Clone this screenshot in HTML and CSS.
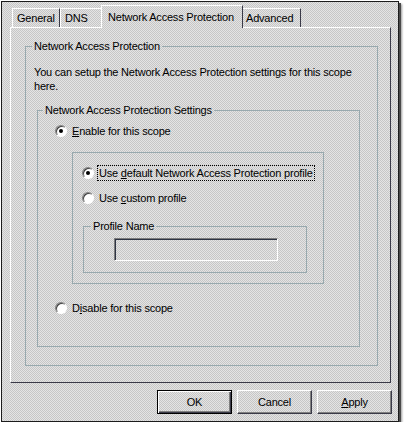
FILE: index.html
```html
<!DOCTYPE html>
<html lang="en">
<head>
  <meta charset="UTF-8">
  <title>Scope Properties</title>
  <link rel="stylesheet" href="styles.css">
</head>
<body>
  <div class="dialog">
    <div class="tabs">
      <div class="tab tab-general">General</div>
      <div class="tab tab-dns">DNS</div>
      <div class="tab tab-active">Network Access Protection</div>
      <div class="tab tab-advanced">Advanced</div>
    </div>

    <div class="panel">
      <fieldset class="group group-outer">
        <legend>Network Access Protection</legend>
        <p class="intro">You can setup the Network Access Protection settings for this scope here.</p>

        <fieldset class="group group-settings">
          <legend>Network Access Protection Settings</legend>
          <label class="radio row-enable"><span class="dot checked"></span><span class="text"><u>E</u>nable for this scope</span></label>

          <div class="profile-box">
            <label class="radio row-default"><span class="dot checked"></span><span class="text focus">Use <u>d</u>efault Network Access Protection profile</span></label>
            <label class="radio row-custom"><span class="dot"></span><span class="text">Use <u>c</u>ustom profile</span></label>

            <fieldset class="group group-profile">
              <legend>Profile Name</legend>
              <div class="textbox"></div>
            </fieldset>
          </div>

          <label class="radio row-disable"><span class="dot"></span><span class="text">D<u>i</u>sable for this scope</span></label>
        </fieldset>
      </fieldset>
    </div>

    <div class="buttons">
      <button class="btn btn-default">OK</button>
      <button class="btn">Cancel</button>
      <button class="btn"><u>A</u>pply</button>
    </div>
  </div>
</body>
</html>
```

FILE: styles.css
```css
body {
  margin: 0;
  background-color: #ffffff;
  font-family: "Liberation Sans", Arial, sans-serif;
  font-size: 11px;
  letter-spacing: -0.2px;
  color: #000000;
}

/* dithered classic-grey surface */
.dialog,
.tab-active {
  background: repeating-conic-gradient(#e4e4e4 0 25%, #c6c6c6 0 50%) 0 0 / 2px 2px;
}

.dialog {
  box-sizing: border-box;
  width: 398px;
  height: 421px;
  margin: 1px 0 0 1px;
  padding: 0 7px 0 8px;
  border: 1px solid #1c1c1c;
  box-shadow: 2px 2px 0 #4a4a4a, 3px 3px 2px #9a9a9a;
}

/* tabs */
.tabs {
  display: flex;
  align-items: flex-end;
  height: 22px;
  margin-top: 3px;
  padding-left: 2px;
}

.tab {
  box-sizing: border-box;
  height: 19px;
  padding: 2px 0 0 4px;
  border-top: 1px solid #ffffff;
  border-left: 1px solid #ffffff;
  border-right: 1px solid #3a3a48;
  line-height: 14px;
  white-space: nowrap;
}

.tab-general {
  width: 48px;
}

.tab-dns {
  width: 41px;
  border-right: none;
}

.tab-active {
  position: relative;
  z-index: 1;
  width: 142px;
  height: 23px;
  margin-bottom: -1px;
  padding: 4px 0 0 6px;
}

.tab-advanced {
  width: 58px;
  padding-left: 3px;
  border-left: none;
}

/* page body */
.panel {
  box-sizing: border-box;
  height: 356px;
  padding: 12px 12px 0 14px;
  border: 1px solid;
  border-color: #ffffff #3a3a48 #3a3a48 #ffffff;
}

.group {
  margin: 0;
  padding: 0;
  min-width: 0;
  border: 1px solid #98a9ae;
}

.group legend {
  padding: 0 2px;
  line-height: 13px;
}

.group-outer legend {
  margin-left: 6px;
}

.intro {
  margin: 12px 12px 0 8px;
  line-height: 14px;
}

.group-settings {
  margin: 11px 17px 18px 11px;
  padding-bottom: 30px;
}

.group-settings legend {
  margin-left: 5px;
}

/* radio buttons */
.radio {
  display: flex;
  align-items: center;
  gap: 3px;
}

.dot {
  box-sizing: border-box;
  position: relative;
  width: 12px;
  height: 12px;
  border-radius: 50%;
  border: 1px solid;
  border-color: #808080 #ffffff #ffffff #808080;
  background-color: #ffffff;
  box-shadow: inset 1px 1px 0 #404040;
}

.dot.checked::after {
  content: "";
  position: absolute;
  left: 3px;
  top: 3px;
  width: 4px;
  height: 4px;
  border-radius: 50%;
  background-color: #000000;
}

.radio .text {
  padding: 0 1px;
  border: 1px dotted transparent;
  line-height: 14px;
  white-space: nowrap;
}

.radio .text.focus {
  border-color: #000000;
}

.row-enable,
.row-disable {
  margin-left: 17px;
}

.row-enable {
  margin-top: 6px;
}

.row-disable {
  margin-top: 16px;
}

.profile-box {
  width: 252px;
  box-sizing: border-box;
  margin: 13px 0 0 34px;
  padding: 12px 0 10px 9px;
  border: 1px solid #98a9ae;
}

.row-custom {
  margin-top: 9px;
}

.group-profile {
  width: 224px;
  box-sizing: border-box;
  margin: 14px 0 0 1px;
}

.group-profile legend {
  margin-left: 7px;
}

.textbox {
  box-sizing: border-box;
  width: 164px;
  height: 23px;
  margin: 5px 0 11px 30px;
  border: 1px solid;
  border-color: #7c7c7c #ffffff #ffffff #7c7c7c;
  box-shadow: inset 1px 1px 0 #2e3444;
}

/* dialog buttons */
.buttons {
  display: flex;
  justify-content: flex-end;
  gap: 5px;
  margin: 7px -1px 0 0;
}

.btn {
  box-sizing: border-box;
  width: 75px;
  height: 24px;
  padding: 0;
  background: transparent;
  border: 1px solid;
  border-color: #ffffff #3a3a48 #3a3a48 #ffffff;
  box-shadow: inset -1px -1px 0 #808080;
  font-family: "Liberation Sans", Arial, sans-serif;
  font-size: 11px;
  letter-spacing: -0.2px;
  color: #000000;
}

.btn-default {
  border-color: #000000;
  box-shadow: inset 1px 1px 0 #ffffff, inset -1px -1px 0 #3a3a48, inset -2px -2px 0 #808080;
}
```
